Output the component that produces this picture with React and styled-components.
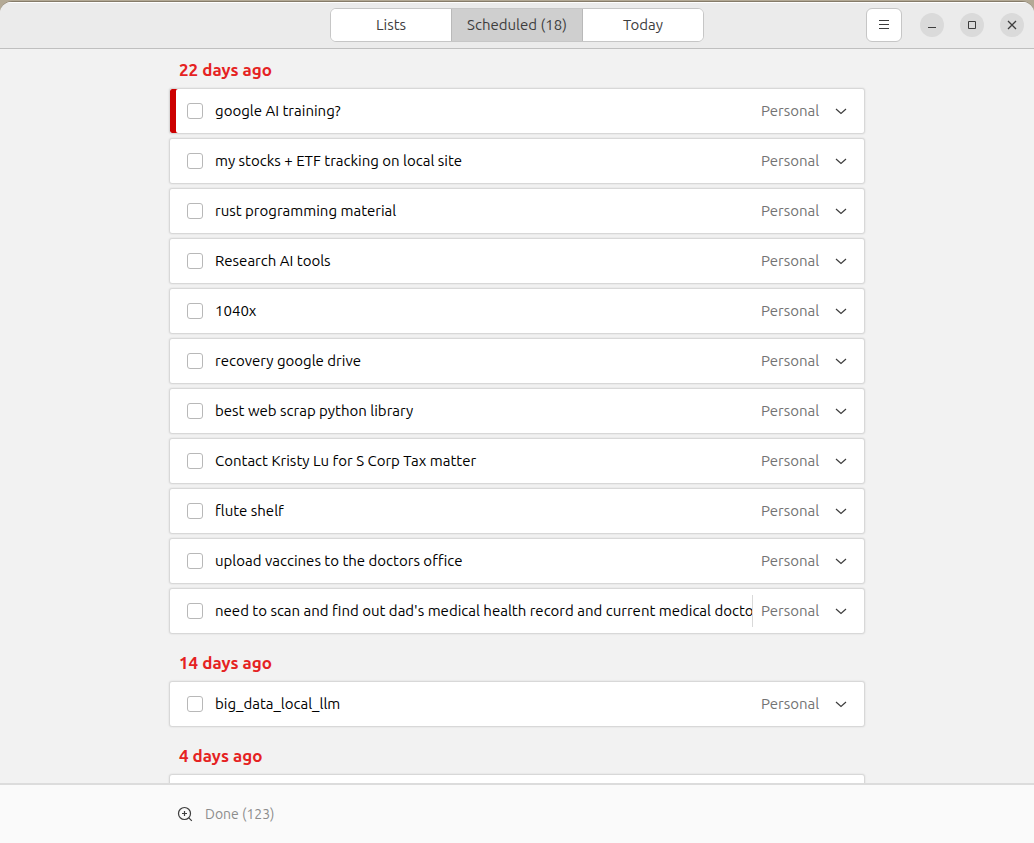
import React from "react";
import styled, { createGlobalStyle } from "styled-components";

const GlobalStyle = createGlobalStyle`
  * { box-sizing: border-box; }
  body {
    margin: 0;
    background: #b3a995;
    color: #000;
    font: 15px/20px Ubuntu, "Noto Sans", sans-serif;
  }
  button, input { font: inherit; }
  button { margin: 0; padding: 0; border: 0; background: none; cursor: pointer; }
`;

const Desktop = styled.div`
  height: 100vh;
  padding-top: 1px;
`;

const Window = styled.div`
  display: flex;
  flex-direction: column;
  height: 100%;
  overflow: hidden;
  border-top: 1px solid #857b69;
  border-radius: 12px 12px 0 0;
  background: #f2f2f2;
`;

const HeaderBar = styled.header`
  display: grid;
  grid-template-columns: 1fr auto 1fr;
  align-items: center;
  flex: none;
  height: 47px;
  padding: 0 10px 1px;
  border-top: 1px solid #fff;
  border-bottom: 1px solid #bfbfbf;
  background: #ebebeb;
`;

const ViewSwitcher = styled.nav`
  display: flex;
  grid-column: 2;
  height: 34px;
  overflow: hidden;
  border: 1px solid #c6c6c6;
  border-radius: 6px;
  background: #fff;
`;

const ViewButton = styled.button`
  width: ${(p) => (p.$active ? 132 : 120)}px;
  border: solid #b9b9b9;
  border-width: ${(p) => (p.$active ? "0 1px" : "0")};
  background: ${(p) => (p.$active ? "#cfcfcf" : "#fff")};
  color: #3d3d3d;
`;

const WindowActions = styled.div`
  display: flex;
  align-items: center;
  justify-content: flex-end;
  gap: 16px;
`;

const MenuButton = styled.button`
  display: grid;
  place-items: center;
  width: 36px;
  height: 34px;
  margin-right: 2px;
  border: 1px solid #c6c6c6;
  border-radius: 6px;
  background: #fff;
`;

const WindowButton = styled.button`
  display: grid;
  place-items: center;
  width: 24px;
  height: 24px;
  border-radius: 50%;
  background: #dadada;
`;

const Icon = styled.svg`
  display: block;
  flex: none;
  width: 16px;
  height: 16px;
  fill: none;
  stroke: #3d3d3d;
`;

const ScrollArea = styled.main`
  flex: 1;
  min-height: 0;
  padding-top: 3px;
  overflow-y: auto;
  scrollbar-width: none;
`;

const Column = styled.div`
  width: 100%;
  max-width: 696px;
  margin: 0 auto;
`;

const Group = styled.section`
  & + & { margin-top: 11px; }
`;

const GroupTitle = styled.h2`
  margin: 0;
  padding: 0 10px;
  color: #e52222;
  font-size: 17px;
  line-height: 36px;
`;

const TaskList = styled.ul`
  display: flex;
  flex-direction: column;
  gap: 4px;
  margin: 0;
  padding: 0;
  list-style: none;
`;

const TaskCard = styled.li`
  display: flex;
  align-items: center;
  height: 46px;
  padding: 0 15px 0 17px;
  border: 1px solid #d8d8d8;
  border-radius: 3px;
  background: #fff;
  box-shadow: 0 0 2px rgba(0, 0, 0, 0.12)${(p) => p.$flagged && ", inset 6px 0 #cc0000"};
`;

const CheckBox = styled.input`
  appearance: none;
  flex: none;
  width: 16px;
  height: 16px;
  margin: 0 12px 0 0;
  border: 1px solid #b8b8b8;
  border-radius: 3px;
  background: #fff;
`;

const TaskTitle = styled.label`
  flex: 1;
  min-width: 0;
  padding: 6px 0;
  overflow: hidden;
  white-space: nowrap;
  border-right: 1px solid ${(p) => (p.$long ? "#d9d9d9" : "transparent")};
`;

const ListName = styled.span`
  width: 64px;
  margin: 0 8px;
  color: #737373;
`;

const Footer = styled.footer`
  flex: none;
  padding: 14px 0;
  border-top: 2px solid #dcdcdc;
  background: #fafafa;
`;

const DoneButton = styled.button`
  display: flex;
  align-items: center;
  gap: 12px;
  height: 30px;
  margin-left: 8px;
  color: #8c8c8c;
  && { font-size: 14px; }
`;

const groups = [
  {
    title: "22 days ago",
    tasks: [
      { title: "google AI training?", flagged: true },
      { title: "my stocks + ETF tracking on local site" },
      { title: "rust programming material" },
      { title: "Research AI tools" },
      { title: "1040x" },
      { title: "recovery google drive" },
      { title: "best web scrap python library" },
      { title: "Contact Kristy Lu for S Corp Tax matter" },
      { title: "flute shelf" },
      { title: "upload vaccines to the doctors office" },
      {
        title: "need to scan and find out dad's medical health record and current medical docto",
        long: true,
      },
    ],
  },
  { title: "14 days ago", tasks: [{ title: "big_data_local_llm" }] },
  { title: "4 days ago", tasks: [] },
];

function Task({ id, task }) {
  return (
    <TaskCard $flagged={task.flagged}>
      <CheckBox type="checkbox" id={id} />
      <TaskTitle htmlFor={id} $long={task.long}>{task.title}</TaskTitle>
      <ListName>Personal</ListName>
      <button aria-label="Show details">
        <Icon viewBox="0 0 16 16"><path d="M3 6l5 4.5L13 6" strokeWidth="1.2" /></Icon>
      </button>
    </TaskCard>
  );
}

export default function App() {
  return (
    <Desktop>
      <GlobalStyle />
      <Window>
        <HeaderBar>
          <ViewSwitcher>
            <ViewButton>Lists</ViewButton>
            <ViewButton $active aria-current="page">Scheduled (18)</ViewButton>
            <ViewButton>Today</ViewButton>
          </ViewSwitcher>
          <WindowActions>
            <MenuButton aria-label="Menu">
              <Icon viewBox="0 0 16 16"><path d="M3 3.5h10M3 7.5h10M3 11.5h10" /></Icon>
            </MenuButton>
            <WindowButton aria-label="Minimize">
              <Icon viewBox="0 0 16 16"><path d="M4 10.5h8" /></Icon>
            </WindowButton>
            <WindowButton aria-label="Maximize">
              <Icon viewBox="0 0 16 16"><path d="M4.5 4.5h7v7h-7z" /></Icon>
            </WindowButton>
            <WindowButton aria-label="Close">
              <Icon viewBox="0 0 16 16"><path d="M4 4l8 8M12 4l-8 8" strokeWidth="1.3" /></Icon>
            </WindowButton>
          </WindowActions>
        </HeaderBar>
        <ScrollArea>
          <Column>
            {groups.map((group, g) => (
              <Group key={group.title}>
                <GroupTitle>{group.title}</GroupTitle>
                <TaskList>
                  {group.tasks.map((task, t) => (
                    <Task key={task.title} id={`task-${g}-${t}`} task={task} />
                  ))}
                  {group.tasks.length === 0 && <TaskCard />}
                </TaskList>
              </Group>
            ))}
          </Column>
        </ScrollArea>
        <Footer>
          <Column>
            <DoneButton>
              <Icon viewBox="0 0 16 16">
                <circle cx="7.5" cy="7.5" r="6" strokeWidth="1.2" />
                <path d="M5 7.5h5M7.5 5v5M11.8 11.8l3 3" strokeWidth="1.2" />
              </Icon>
              Done (123)
            </DoneButton>
          </Column>
        </Footer>
      </Window>
    </Desktop>
  );
}
